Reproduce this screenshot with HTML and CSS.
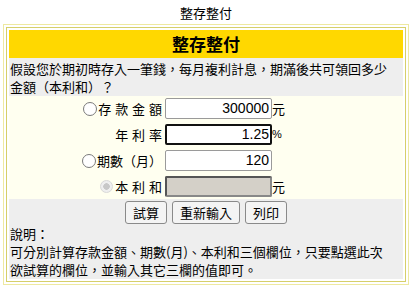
FILE: index.html
```html
<!DOCTYPE html>
<html lang="zh-Hant">
<head>
<meta charset="utf-8">
<title>整存整付</title>
<link rel="stylesheet" href="styles.css">
</head>
<body>
<div class="page-title">整存整付</div>
<div class="frame">
  <div class="frame-inner">
    <div class="head">整存整付</div>
    <div class="desc">假設您於期初時存入一筆錢，每月複利計息，期滿後共可領回多少金額（本利和）？</div>
    <div class="form">
      <div class="lbl"><span class="radio"></span>存 款 金 額</div>
      <div class="field"><span class="inp">300000</span></div>
      <div class="unit">元</div>

      <div class="lbl">年 利 率</div>
      <div class="field"><span class="inp focus">1.25</span></div>
      <div class="unit pct">%</div>

      <div class="lbl"><span class="radio"></span>期數（月）</div>
      <div class="field"><span class="inp">120</span></div>
      <div class="unit"></div>

      <div class="lbl"><span class="radio off"></span>本 利 和</div>
      <div class="field"><span class="inp dis"></span></div>
      <div class="unit">元</div>
    </div>
    <div class="buttons">
      <span class="btn">試算</span>
      <span class="btn">重新輸入</span>
      <span class="btn">列印</span>
    </div>
    <div class="note">說明：<br>可分別計算存款金額、期數(月)、本利和三個欄位，只要點選此次欲試算的欄位，並輸入其它三欄的值即可。</div>
  </div>
</div>
</body>
</html>
```
FILE: styles.css
```css
html, body {
  margin: 0;
  padding: 0;
  background: #ffffff;
}
body {
  font-family: "Noto Sans CJK TC", "Noto Sans", sans-serif;
  color: #000;
  font-size: 13px;
  width: 412px;
  height: 288px;
  overflow: hidden;
}
.page-title {
  text-align: center;
  font-size: 13px;
  line-height: 16px;
  padding-top: 5px;
  height: 19px;
}
.frame {
  margin: 0 3px 0 3px;
  border: 1px solid #eee9a0;
  padding: 2px;
}
.frame-inner {
  border: 1px solid #d6cf6a;
  padding: 2px;
}
.head {
  background: #ffd800;
  text-align: center;
  font-weight: bold;
  font-size: 17px;
  line-height: 28px;
  height: 28px;
}
.desc {
  background: #eeeeee;
  line-height: 18px;
  padding: 2px 14px 0 1px;
  height: 36px;
  overflow: hidden;
}
.form {
  background: #fffff0;
  display: grid;
  grid-template-columns: 153px 107px 30px;
  column-gap: 3px;
  row-gap: 5px;
  padding: 2px 0 2px 0;
  align-items: center;
}
.lbl {
  text-align: right;
  display: flex;
  justify-content: flex-end;
  align-items: center;
  line-height: 21px;
  word-spacing: 1px;
}
.radio {
  width: 14px;
  height: 14px;
  border: 1px solid #7a7a7a;
  border-radius: 50%;
  background: #fff;
  margin-right: 1px;
  box-sizing: border-box;
}
.radio.off {
  width: 13px;
  height: 13px;
  border-color: #d8d8d8;
  background: radial-gradient(circle, #c8c8c8 0 3px, #efefef 3.5px);
  margin-right: 2px;
}
.field {
  display: flex;
}
.inp {
  display: block;
  width: 107px;
  height: 21px;
  box-sizing: border-box;
  border: 1px solid #9a9a9a;
  border-radius: 2px;
  background: #fff;
  text-align: right;
  font-family: "Liberation Sans", Arial, sans-serif;
  font-size: 14px;
  line-height: 19px;
  padding-right: 2px;
}
.inp.focus {
  border: 2px solid #111;
  line-height: 17px;
  padding-right: 1px;
}
.inp.dis {
  background: #d4d0c8;
  border: 2px solid #555;
  border-right-color: #888;
  border-bottom-color: #888;
}
.unit {
  margin-left: -3px;
  line-height: 21px;
}
.unit.pct {
  font-family: "Liberation Sans", Arial, sans-serif;
  font-size: 11px;
}
.buttons {
  background: #eeeeee;
  display: flex;
  justify-content: center;
  gap: 5px;
  padding: 2px 0 1px 0;
}
.btn {
  display: inline-block;
  border: 1px solid #8a8a8a;
  border-radius: 3px;
  background: #f4f4f4;
  font-size: 13px;
  line-height: 21px;
  padding: 0 7px;
}
.note {
  background: #eeeeee;
  line-height: 18px;
  padding: 0 14px 0 1px;
}
```
